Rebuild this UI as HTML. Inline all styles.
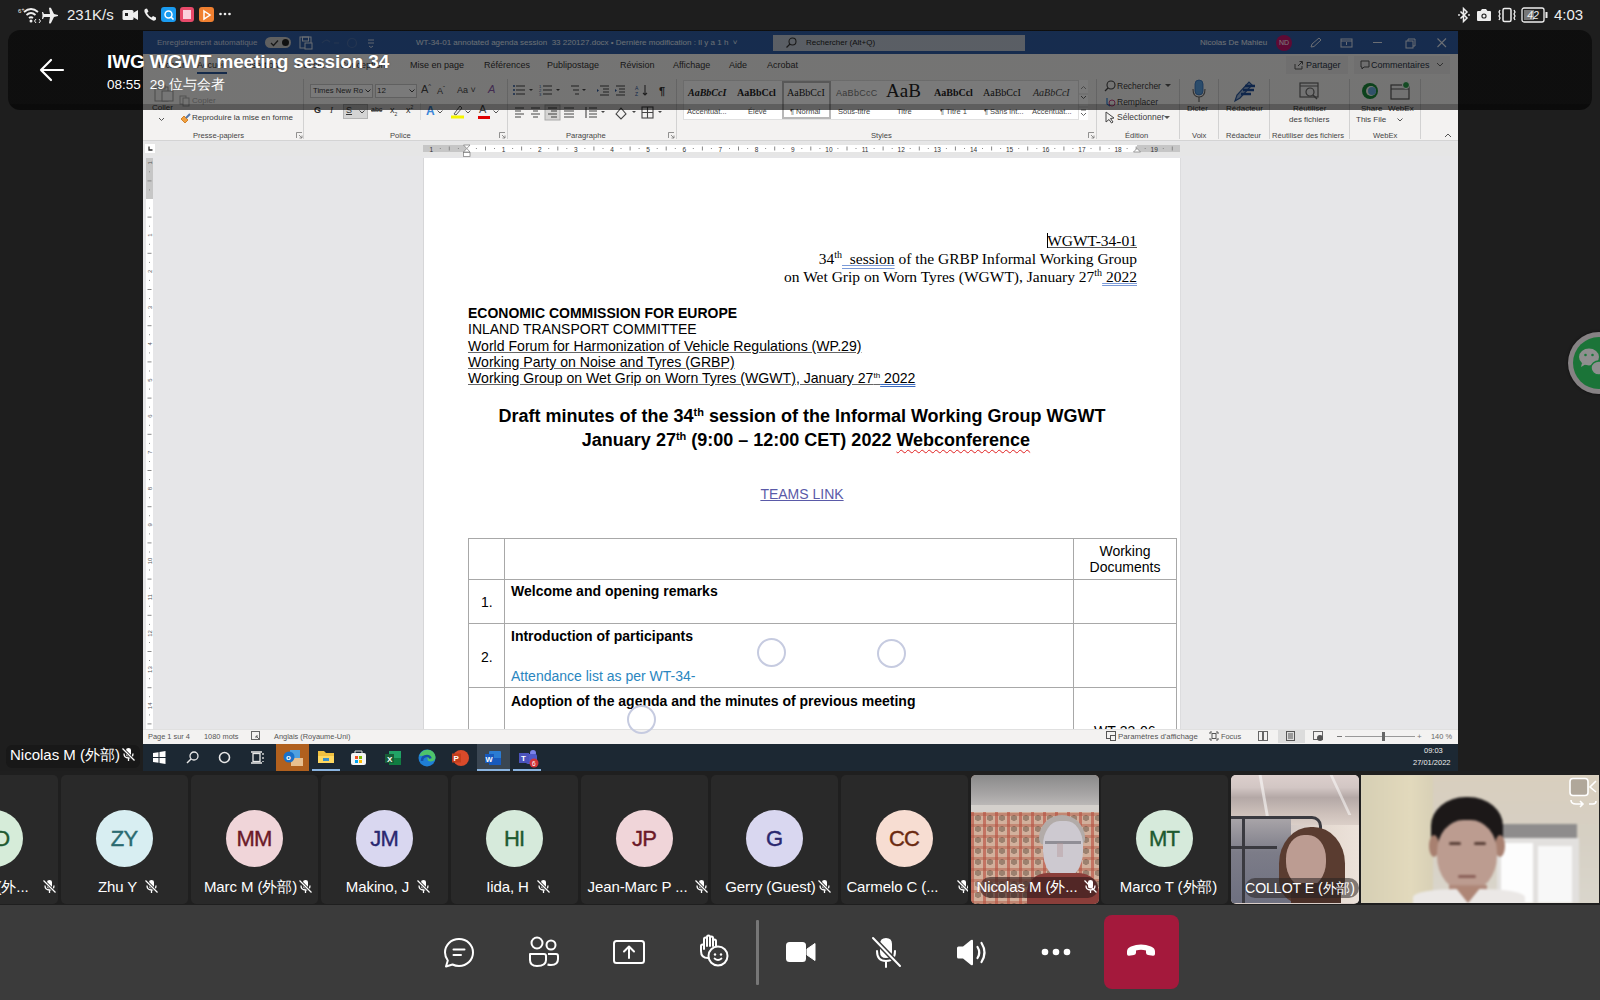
<!DOCTYPE html>
<html><head><meta charset="utf-8">
<style>
*{margin:0;padding:0;box-sizing:border-box}
html,body{width:1600px;height:1000px;overflow:hidden;background:#1e1e1e;font-family:"Liberation Sans",sans-serif}
.a{position:absolute;white-space:nowrap}
svg{position:absolute;overflow:visible}
.rb{font-size:8px;color:#3a3a3a}
.lbl{font-size:7.6px;color:#444;top:131px}
.tab{font-size:9px;color:#333;top:60px}
.sep{position:absolute;top:79px;width:1px;height:60px;background:#d2d2d2}
.ttl{font-size:8px;color:#fff;top:38px}
.tile{position:absolute;top:775px;width:127px;height:129px;background:#292929;border-radius:5px;overflow:hidden}
.av{position:absolute;left:35px;top:35px;width:57px;height:57px;border-radius:50%;text-align:center;line-height:58px;font-size:22px;letter-spacing:-0.8px;text-indent:-0.8px;-webkit-text-stroke:0.4px currentColor}
.nm{position:absolute;left:4px;top:103px;width:127px;text-align:center;color:#fff;font-size:15px;white-space:nowrap;letter-spacing:-0.1px}
</style></head><body>

<!-- ============ WORD WINDOW ============ -->
<div class="a" style="left:143px;top:31px;width:1315px;height:740px;background:#e6e6e8"></div>
<!-- title bar -->
<div class="a" style="left:143px;top:31px;width:1315px;height:23px;background:#2f5ca2"></div>
<!-- tabs + ribbon bg -->
<div class="a" style="left:143px;top:54px;width:1315px;height:87px;background:#f3f2f1;border-bottom:1px solid #d4d4d4"></div>
<!-- ruler row bg -->
<div class="a" style="left:143px;top:142px;width:1315px;height:14px;background:#e6e6e6"></div>

<!-- title bar content -->
<div class="a ttl" style="left:157px;color:#c9d3e6">Enregistrement automatique</div>
<div class="a" style="left:265px;top:37px;width:26px;height:11px;border-radius:6px;background:#c8c8c8"></div>
<svg style="left:270px;top:39px" width="10" height="8"><path d="M1 4 L3.5 6.5 L8 1.5" stroke="#333" stroke-width="1.3" fill="none"/></svg>
<div class="a" style="left:282px;top:39px;width:7px;height:7px;border-radius:50%;background:#222"></div>
<svg style="left:299px;top:36px" width="14" height="14"><rect x="1" y="1" width="11" height="11" fill="none" stroke="#dbe3f0" stroke-width="1"/><rect x="3.5" y="1" width="6" height="4" fill="none" stroke="#dbe3f0" stroke-width="1"/><rect x="6" y="7" width="7" height="6" fill="#2f5ca2" stroke="#dbe3f0" stroke-width="1"/></svg>
<svg style="left:320px;top:37px" width="40" height="12"><path d="M2 6 Q6 1 10 5" stroke="#4b6ea8" stroke-width="1.2" fill="none"/><path d="M14 6 L19 6" stroke="#4b6ea8" stroke-width="1.2"/><circle cx="32" cy="6" r="4.5" stroke="#4b6ea8" stroke-width="1.2" fill="none"/></svg>
<svg style="left:367px;top:38px" width="8" height="10"><path d="M1 2 H7 M1 5 H7 M2 8 L4 9.5 L6 8" stroke="#c9d3e6" stroke-width="1" fill="none"/></svg>
<div class="a ttl" style="left:416px;color:#dfe6f2">WT-34-01 annotated agenda session &nbsp;33 220127.docx • Dernière modification : Il y a 1 h &nbsp;˅</div>
<div class="a" style="left:773px;top:35px;width:252px;height:16px;background:#bcc5d2"></div>
<svg style="left:785px;top:37px" width="12" height="12"><circle cx="7.5" cy="4.5" r="3.5" stroke="#333" stroke-width="1.1" fill="none"/><path d="M5 7 L1.5 10.5" stroke="#333" stroke-width="1.3"/></svg>
<div class="a ttl" style="left:806px;color:#222">Rechercher (Alt+Q)</div>
<div class="a ttl" style="left:1200px;color:#e6ecf5">Nicolas De Mahieu</div>
<div class="a" style="left:1276px;top:35px;width:16px;height:16px;border-radius:50%;background:#c4146c;color:#fff;font-size:7px;line-height:16px;text-align:center">ND</div>
<svg style="left:1309px;top:37px" width="14" height="12"><path d="M2 10 L3 7 L10 1 L12 3 L5 9.5 Z" stroke="#dfe6f2" stroke-width="1" fill="none"/></svg>
<svg style="left:1340px;top:38px" width="14" height="10"><rect x="1" y="1" width="11" height="8" stroke="#dfe6f2" stroke-width="1" fill="none"/><path d="M1 3 H12 M6.5 4 V7" stroke="#dfe6f2" stroke-width="1"/></svg>
<div class="a" style="left:1373px;top:42px;width:9px;height:1px;background:#dfe6f2"></div>
<svg style="left:1405px;top:38px" width="12" height="12"><rect x="1" y="3" width="7" height="7" stroke="#dfe6f2" stroke-width="1" fill="none"/><path d="M3 3 V1 H10 V8 H8" stroke="#dfe6f2" stroke-width="1" fill="none"/></svg>
<svg style="left:1436px;top:37px" width="12" height="12"><path d="M1.5 1.5 L10 10 M10 1.5 L1.5 10" stroke="#dfe6f2" stroke-width="1.1"/></svg>

<!-- tabs -->
<div class="a tab" style="left:158px">Fichier</div>
<div class="a tab" style="left:197px">Accueil</div>
<div class="a" style="left:197px;top:72px;width:30px;height:2px;background:#2b579a"></div>
<div class="a tab" style="left:244px">Insertion</div>
<div class="a tab" style="left:297px">Dessin</div>
<div class="a tab" style="left:340px">Conception</div>
<div class="a tab" style="left:410px">Mise en page</div>
<div class="a tab" style="left:484px">Références</div>
<div class="a tab" style="left:547px">Publipostage</div>
<div class="a tab" style="left:620px">Révision</div>
<div class="a tab" style="left:673px">Affichage</div>
<div class="a tab" style="left:729px">Aide</div>
<div class="a tab" style="left:767px">Acrobat</div>
<div class="a" style="left:1286px;top:56px;width:62px;height:18px;background:#e9e8e7"></div>
<svg style="left:1294px;top:60px" width="10" height="10"><path d="M1 4 V9 H8 V6 M4 6 L8 2 M5.5 1.5 H8.5 V4.5" stroke="#555" stroke-width="1" fill="none"/></svg>
<div class="a tab" style="left:1306px;color:#2a3548">Partager</div>
<div class="a" style="left:1354px;top:56px;width:96px;height:18px;background:#e9e8e7"></div>
<svg style="left:1360px;top:60px" width="10" height="10"><path d="M1 1 H9 V7 H4 L2 9 V7 H1 Z" stroke="#555" stroke-width="1" fill="none"/></svg>
<div class="a tab" style="left:1371px;color:#2a3548">Commentaires</div>
<svg style="left:1436px;top:62px" width="8" height="6"><path d="M1 1 L4 4 L7 1" stroke="#666" stroke-width="1" fill="none"/></svg>

<!-- ribbon: presse-papiers -->
<svg style="left:153px;top:84px" width="22" height="18"><rect x="2" y="3" width="13" height="14" fill="none" stroke="#999" stroke-width="1"/><rect x="5" y="1" width="7" height="4" fill="#f3f2f1" stroke="#999" stroke-width="1"/><rect x="9" y="7" width="11" height="10" fill="#f6f6f6" stroke="#999" stroke-width="1"/></svg>
<div class="a rb" style="left:152px;top:103px">Coller</div>
<svg style="left:158px;top:117px" width="7" height="5"><path d="M1 1 L3.5 3.5 L6 1" stroke="#555" stroke-width="1" fill="none"/></svg>
<svg style="left:179px;top:95px" width="12" height="12"><rect x="1" y="1" width="6" height="8" fill="none" stroke="#aaa" stroke-width="1"/><rect x="4" y="3" width="6" height="8" fill="#f3f2f1" stroke="#aaa" stroke-width="1"/></svg>
<div class="a rb" style="left:192px;top:96px;color:#a8a8a8">Copier</div>
<svg style="left:179px;top:112px" width="13" height="13"><path d="M2 7 L6 11 L9 8 L5 4 Z" fill="#f0a040" stroke="#c87010" stroke-width="0.8"/><path d="M7 6 L11 2" stroke="#5577aa" stroke-width="2"/></svg>
<div class="a rb" style="left:192px;top:113px">Reproduire la mise en forme</div>
<div class="a lbl" style="left:193px">Presse-papiers</div>
<svg style="left:296px;top:132px" width="7" height="7"><path d="M0.5 0.5 H6 M0.5 0.5 V6 M3 3 L6 6 M6 3.5 V6 H3.5" stroke="#777" stroke-width="0.8" fill="none"/></svg>
<div class="sep" style="left:303px"></div>

<!-- police -->
<div class="a" style="left:310px;top:84px;width:63px;height:14px;background:#fff;border:1px solid #c8c8c8"></div>
<div class="a rb" style="left:313px;top:86px;font-size:7.7px">Times New Ro</div>
<svg style="left:365px;top:89px" width="6" height="4"><path d="M0.5 0.5 L3 3 L5.5 0.5" stroke="#444" stroke-width="1" fill="none"/></svg>
<div class="a" style="left:375px;top:84px;width:42px;height:14px;background:#fff;border:1px solid #c8c8c8"></div>
<div class="a rb" style="left:377px;top:86px">12</div>
<svg style="left:409px;top:89px" width="6" height="4"><path d="M0.5 0.5 L3 3 L5.5 0.5" stroke="#444" stroke-width="1" fill="none"/></svg>
<div class="a" style="left:421px;top:83px;font-size:11px;color:#444">A<sup style="font-size:6px">^</sup></div>
<div class="a" style="left:437px;top:85px;font-size:9px;color:#444">A<sup style="font-size:6px">ˇ</sup></div>
<div class="a" style="left:457px;top:85px;font-size:9px;color:#444">Aa ˅</div>
<div class="a" style="left:488px;top:83px;font-size:11px;color:#8a5aa8;font-style:italic">A</div>
<div class="a" style="left:314px;top:105px;font-size:9px;font-weight:bold;color:#333">G</div>
<div class="a" style="left:330px;top:105px;font-size:9px;font-style:italic;font-family:'Liberation Serif';color:#333">I</div>
<div class="a" style="left:343px;top:104px;width:25px;height:15px;background:#d4d4d4;border:1px solid #b4b4b4"></div>
<div class="a" style="left:346px;top:105px;font-size:9px;text-decoration:underline;color:#333">S</div>
<svg style="left:359px;top:110px" width="6" height="4"><path d="M0.5 0.5 L3 3 L5.5 0.5" stroke="#444" stroke-width="1" fill="none"/></svg>
<div class="a" style="left:371px;top:106px;font-size:7px;color:#444;text-decoration:line-through">abc</div>
<div class="a" style="left:390px;top:105px;font-size:9px;color:#333">x<sub style="font-size:5px">2</sub></div>
<div class="a" style="left:406px;top:104px;font-size:9px;color:#333">x<sup style="font-size:5px">2</sup></div>
<div class="sep" style="left:420px;top:103px;height:17px;background:#ddd"></div>
<div class="a" style="left:426px;top:104px;font-size:12px;font-weight:bold;color:#3b86d8">A</div>
<svg style="left:437px;top:110px" width="6" height="4"><path d="M0.5 0.5 L3 3 L5.5 0.5" stroke="#555" stroke-width="1" fill="none"/></svg>
<svg style="left:450px;top:104px" width="14" height="15"><path d="M4 10 L10 2 L12 4 L6 11 Z" fill="none" stroke="#555" stroke-width="1"/><rect x="1" y="11.5" width="13" height="3" fill="#f5f500"/></svg>
<svg style="left:465px;top:110px" width="6" height="4"><path d="M0.5 0.5 L3 3 L5.5 0.5" stroke="#555" stroke-width="1" fill="none"/></svg>
<div class="a" style="left:479px;top:103px;font-size:11px;color:#444">A</div>
<div class="a" style="left:478px;top:116px;width:12px;height:3px;background:#e00000"></div>
<svg style="left:493px;top:110px" width="6" height="4"><path d="M0.5 0.5 L3 3 L5.5 0.5" stroke="#555" stroke-width="1" fill="none"/></svg>
<div class="a lbl" style="left:390px">Police</div>
<svg style="left:499px;top:132px" width="7" height="7"><path d="M0.5 0.5 H6 M0.5 0.5 V6 M3 3 L6 6 M6 3.5 V6 H3.5" stroke="#777" stroke-width="0.8" fill="none"/></svg>
<div class="sep" style="left:507px"></div>

<!-- paragraphe -->
<svg style="left:512px;top:84px" width="160" height="38">
 <g stroke="#444" stroke-width="1.1" fill="none">
  <path d="M4 2 H13 M4 6 H13 M4 10 H13"/><path d="M31 2 H40 M31 6 H40 M31 10 H40"/><path d="M59 2 H67 M61 6 H67 M63 10 H67"/>
  <path d="M88 2 H97 M91 5 H97 M91 8 H97 M88 11 H97"/><path d="M104 2 H113 M107 5 H113 M107 8 H113 M104 11 H113"/>
  <path d="M133 1 V11 M131 9 L133 11 L135 9"/>
  <path d="M3 24 H12 M3 27 H9 M3 30 H12 M3 33 H9"/><path d="M19 24 H28 M21 27 H26 M19 30 H28 M21 33 H26"/><path d="M36 24 H45 M39 27 H45 M36 30 H45 M39 33 H45"/><path d="M52 24 H62 M52 27 H62 M52 30 H62 M52 33 H62"/>
  <path d="M77 24 H85 M77 27 H85 M77 30 H85 M77 33 H85 M74 23 V34"/>
  <path d="M104 30 L109 24 L114 30 L109 35 Z"/>
  <rect x="130" y="23" width="11" height="11"/><path d="M135.5 23 V34 M130 28.5 H141"/>
 </g>
 <g fill="#2b579a"><circle cx="2" cy="2" r="1"/><circle cx="2" cy="6" r="1"/><circle cx="2" cy="10" r="1"/></g>
 <g fill="#2b579a" font-size="4" font-family="Liberation Sans"><text x="27" y="4">1</text><text x="27" y="8">2</text><text x="27" y="12">3</text></g>
 <g fill="#2b579a"><path d="M87 6.5 L85 5 V8 Z"/><path d="M103 5 L105 6.5 L103 8 Z"/><text x="123" y="6" font-size="5" font-family="Liberation Sans">A</text><text x="123" y="12" font-size="5" font-family="Liberation Sans">Z</text></g>
 <text x="147" y="11" font-size="11" fill="#333" font-family="Liberation Sans" font-weight="bold">¶</text>
 <g fill="#444"><path d="M17 5 L21 5 L19 7 Z"/><path d="M44 5 L48 5 L46 7 Z"/><path d="M70 5 L74 5 L72 7 Z"/><path d="M89 27 L93 27 L91 29 Z"/><path d="M120 27 L124 27 L122 29 Z"/><path d="M146 27 L150 27 L148 29 Z"/></g>
 <rect x="33" y="21" width="15" height="15" fill="rgba(0,0,0,0.12)" stroke="#aaa" stroke-width="1"/>
</svg>
<div class="a lbl" style="left:566px">Paragraphe</div>
<svg style="left:668px;top:132px" width="7" height="7"><path d="M0.5 0.5 H6 M0.5 0.5 V6 M3 3 L6 6 M6 3.5 V6 H3.5" stroke="#777" stroke-width="0.8" fill="none"/></svg>
<div class="sep" style="left:676px"></div>

<!-- styles gallery -->
<div class="a" style="left:683px;top:80px;width:400px;height:40px;background:#fff;border:1px solid #e0e0e0"></div>
<div class="a" style="left:782px;top:81px;width:49px;height:38px;border:2px solid #b8b8b8;background:#fff"></div>
<div class="a" style="left:688px;top:87px;font-family:'Liberation Serif';font-style:italic;font-weight:bold;font-size:10px;color:#222">AaBbCcI</div>
<div class="a" style="left:737px;top:87px;font-family:'Liberation Serif';font-weight:bold;font-size:10px;color:#222">AaBbCcl</div>
<div class="a" style="left:787px;top:87px;font-family:'Liberation Serif';font-size:10px;color:#222">AaBbCcI</div>
<div class="a" style="left:836px;top:88px;font-family:'Liberation Sans';font-size:9px;color:#777;letter-spacing:0.3px">AaBbCcC</div>
<div class="a" style="left:886px;top:80px;font-family:'Liberation Serif';font-size:19px;color:#222">AaB</div>
<div class="a" style="left:934px;top:87px;font-family:'Liberation Serif';font-weight:bold;font-size:10px;color:#222">AaBbCcl</div>
<div class="a" style="left:983px;top:87px;font-family:'Liberation Serif';font-size:10px;color:#222">AaBbCcI</div>
<div class="a" style="left:1033px;top:87px;font-family:'Liberation Serif';font-style:italic;font-size:10px;color:#444">AaBbCcI</div>
<div class="a rb" style="left:687px;top:107px;font-size:7.5px;color:#444">Accentuat...</div>
<div class="a rb" style="left:748px;top:107px;font-size:7.5px;color:#444">Élevé</div>
<div class="a rb" style="left:790px;top:107px;font-size:7.5px;color:#444">¶ Normal</div>
<div class="a rb" style="left:838px;top:107px;font-size:7.5px;color:#444">Sous-titre</div>
<div class="a rb" style="left:897px;top:107px;font-size:7.5px;color:#444">Titre</div>
<div class="a rb" style="left:940px;top:107px;font-size:7.5px;color:#444">¶ Titre 1</div>
<div class="a rb" style="left:984px;top:107px;font-size:7.5px;color:#444">¶ Sans int...</div>
<div class="a rb" style="left:1032px;top:107px;font-size:7.5px;color:#444">Accentuat...</div>
<div class="a" style="left:1078px;top:80px;width:10px;height:40px;border-left:1px solid #e0e0e0;background:#fff"></div>
<svg style="left:1079px;top:82px" width="9" height="38"><path d="M2 7 L4.5 4.5 L7 7" stroke="#999" fill="none"/><path d="M2 14 L4.5 16.5 L7 14" stroke="#666" fill="none"/><path d="M2 28 H7 M2 31 L4.5 33.5 L7 31" stroke="#666" fill="none"/><path d="M0 12 H9 M0 25 H9" stroke="#ddd"/></svg>
<div class="a lbl" style="left:871px">Styles</div>
<svg style="left:1088px;top:132px" width="7" height="7"><path d="M0.5 0.5 H6 M0.5 0.5 V6 M3 3 L6 6 M6 3.5 V6 H3.5" stroke="#777" stroke-width="0.8" fill="none"/></svg>
<div class="sep" style="left:1096px"></div>

<!-- edition -->
<svg style="left:1104px;top:80px" width="12" height="12"><circle cx="7" cy="5" r="4" stroke="#444" stroke-width="1.1" fill="none"/><path d="M4 8 L1 11" stroke="#444" stroke-width="1.3"/></svg>
<div class="a rb" style="left:1117px;top:81px;font-size:8.5px">Rechercher</div><svg style="left:1165px;top:84px" width="6" height="4"><path d="M0 0 H6 L3 3 Z" fill="#555"/></svg>
<svg style="left:1104px;top:96px" width="12" height="12"><path d="M3 2 V8 L6 10" stroke="#2b7cd3" stroke-width="1.2" fill="none"/><circle cx="8" cy="7" r="3" stroke="#c04080" fill="none"/></svg>
<div class="a rb" style="left:1117px;top:97px;font-size:8.5px">Remplacer</div>
<svg style="left:1104px;top:111px" width="12" height="13"><path d="M2 1 L2 11 L5 8.5 L7.5 12 L9 11 L6.5 7.5 L10 7 Z" stroke="#444" stroke-width="1" fill="none"/></svg>
<div class="a rb" style="left:1117px;top:112px;font-size:8.5px">Sélectionner</div><svg style="left:1164px;top:116px" width="6" height="4"><path d="M0 0 H6 L3 3 Z" fill="#555"/></svg>
<div class="a lbl" style="left:1125px">Édition</div>
<div class="sep" style="left:1179px"></div>

<!-- voix -->
<svg style="left:1191px;top:79px" width="16" height="24"><rect x="4" y="1" width="8" height="15" rx="4" fill="#5a9ee0" stroke="#2f6db8" stroke-width="0.8"/><path d="M2 10 Q2 18 8 18 Q14 18 14 10" stroke="#666" stroke-width="1.1" fill="none"/><path d="M8 18 V23" stroke="#666" stroke-width="1.2"/></svg>
<div class="a rb" style="left:1187px;top:104px">Dicter</div>
<div class="a lbl" style="left:1192px">Voix</div>
<div class="sep" style="left:1218px"></div>

<!-- redacteur -->
<svg style="left:1232px;top:79px" width="26" height="24"><path d="M3 22 L5 16 L17 3 L20 6 L8 19 Z" fill="#9ab4d8" stroke="#2b579a" stroke-width="1.2"/><path d="M13 7 H23 M11 11 H22 M9 15 H19" stroke="#1f4e9a" stroke-width="2.4"/></svg>
<div class="a rb" style="left:1226px;top:104px">Rédacteur</div>
<div class="a lbl" style="left:1226px">Rédacteur</div>
<div class="sep" style="left:1269px"></div>

<!-- reutiliser -->
<svg style="left:1299px;top:82px" width="22" height="20"><rect x="1" y="1" width="18" height="14" fill="#eee" stroke="#666" stroke-width="1.2"/><path d="M1 4 H19" stroke="#666"/><circle cx="11" cy="10" r="4" stroke="#666" stroke-width="1.2" fill="none"/><path d="M14 13 L18 17" stroke="#666" stroke-width="1.5"/></svg>
<div class="a rb" style="left:1293px;top:104px">Réutiliser</div>
<div class="a rb" style="left:1289px;top:115px">des fichiers</div>
<div class="a lbl" style="left:1272px">Réutiliser des fichiers</div>
<div class="sep" style="left:1349px"></div>

<!-- webex -->
<svg style="left:1360px;top:81px" width="20" height="20"><circle cx="10" cy="10" r="8" fill="#1a8a3a"/><circle cx="11" cy="10" r="5" fill="#f3f2f1"/><circle cx="12" cy="10" r="4" fill="#6ad"/></svg>
<svg style="left:1390px;top:81px" width="22" height="20"><rect x="1" y="4" width="18" height="14" fill="#eee" stroke="#555" stroke-width="1.2"/><path d="M1 8 H19" stroke="#555"/><circle cx="16" cy="4" r="3.5" fill="#2a9d4a" stroke="#fff"/></svg>
<div class="a rb" style="left:1361px;top:104px">Share</div>
<div class="a rb" style="left:1388px;top:104px">WebEx</div>
<div class="a rb" style="left:1356px;top:115px">This File</div>
<svg style="left:1397px;top:118px" width="6" height="4"><path d="M0.5 0.5 L3 3 L5.5 0.5" stroke="#555" stroke-width="1" fill="none"/></svg>
<div class="a lbl" style="left:1373px">WebEx</div>
<div class="sep" style="left:1420px"></div>
<svg style="left:1444px;top:133px" width="8" height="5"><path d="M1 4 L4 1 L7 4" stroke="#555" stroke-width="1" fill="none"/></svg>

<!-- rulers -->
<div class="a" style="left:145px;top:144px;width:10px;height:9px;background:#fff"></div>
<svg style="left:147px;top:145px" width="7" height="7"><path d="M2 1.5 V5 H5.5" stroke="#333" stroke-width="1.3" fill="none"/></svg>
<div class="a" style="left:423px;top:145px;width:43px;height:7px;background:#c6c6c6"></div>
<div class="a" style="left:466px;top:145px;width:671px;height:7px;background:#fff"></div>
<div class="a" style="left:1137px;top:145px;width:43px;height:7px;background:#c6c6c6"></div>
<svg id="hr" style="left:0;top:145px" width="1600" height="14"><text x="431.2" y="6.5" font-size="6.5" text-anchor="middle" fill="#333" font-family="Liberation Sans">1</text>
<rect x="439.8" y="3" width="1" height="1" fill="#888"/>
<rect x="448.8" y="1.5" width="1" height="4" fill="#888"/>
<rect x="457.9" y="3" width="1" height="1" fill="#888"/>
<rect x="475.9" y="3" width="1" height="1" fill="#888"/>
<rect x="485.0" y="1.5" width="1" height="4" fill="#888"/>
<rect x="494.0" y="3" width="1" height="1" fill="#888"/>
<text x="503.5" y="6.5" font-size="6.5" text-anchor="middle" fill="#333" font-family="Liberation Sans">1</text>
<rect x="512.1" y="3" width="1" height="1" fill="#888"/>
<rect x="521.1" y="1.5" width="1" height="4" fill="#888"/>
<rect x="530.2" y="3" width="1" height="1" fill="#888"/>
<text x="539.7" y="6.5" font-size="6.5" text-anchor="middle" fill="#333" font-family="Liberation Sans">2</text>
<rect x="548.2" y="3" width="1" height="1" fill="#888"/>
<rect x="557.3" y="1.5" width="1" height="4" fill="#888"/>
<rect x="566.3" y="3" width="1" height="1" fill="#888"/>
<text x="575.8" y="6.5" font-size="6.5" text-anchor="middle" fill="#333" font-family="Liberation Sans">3</text>
<rect x="584.4" y="3" width="1" height="1" fill="#888"/>
<rect x="593.4" y="1.5" width="1" height="4" fill="#888"/>
<rect x="602.5" y="3" width="1" height="1" fill="#888"/>
<text x="612.0" y="6.5" font-size="6.5" text-anchor="middle" fill="#333" font-family="Liberation Sans">4</text>
<rect x="620.5" y="3" width="1" height="1" fill="#888"/>
<rect x="629.6" y="1.5" width="1" height="4" fill="#888"/>
<rect x="638.6" y="3" width="1" height="1" fill="#888"/>
<text x="648.1" y="6.5" font-size="6.5" text-anchor="middle" fill="#333" font-family="Liberation Sans">5</text>
<rect x="656.7" y="3" width="1" height="1" fill="#888"/>
<rect x="665.7" y="1.5" width="1" height="4" fill="#888"/>
<rect x="674.8" y="3" width="1" height="1" fill="#888"/>
<text x="684.3" y="6.5" font-size="6.5" text-anchor="middle" fill="#333" font-family="Liberation Sans">6</text>
<rect x="692.8" y="3" width="1" height="1" fill="#888"/>
<rect x="701.9" y="1.5" width="1" height="4" fill="#888"/>
<rect x="710.9" y="3" width="1" height="1" fill="#888"/>
<text x="720.4" y="6.5" font-size="6.5" text-anchor="middle" fill="#333" font-family="Liberation Sans">7</text>
<rect x="729.0" y="3" width="1" height="1" fill="#888"/>
<rect x="738.0" y="1.5" width="1" height="4" fill="#888"/>
<rect x="747.1" y="3" width="1" height="1" fill="#888"/>
<text x="756.6" y="6.5" font-size="6.5" text-anchor="middle" fill="#333" font-family="Liberation Sans">8</text>
<rect x="765.1" y="3" width="1" height="1" fill="#888"/>
<rect x="774.2" y="1.5" width="1" height="4" fill="#888"/>
<rect x="783.2" y="3" width="1" height="1" fill="#888"/>
<text x="792.8" y="6.5" font-size="6.5" text-anchor="middle" fill="#333" font-family="Liberation Sans">9</text>
<rect x="801.3" y="3" width="1" height="1" fill="#888"/>
<rect x="810.3" y="1.5" width="1" height="4" fill="#888"/>
<rect x="819.4" y="3" width="1" height="1" fill="#888"/>
<text x="828.9" y="6.5" font-size="6.5" text-anchor="middle" fill="#333" font-family="Liberation Sans">10</text>
<rect x="837.4" y="3" width="1" height="1" fill="#888"/>
<rect x="846.5" y="1.5" width="1" height="4" fill="#888"/>
<rect x="855.5" y="3" width="1" height="1" fill="#888"/>
<text x="865.0" y="6.5" font-size="6.5" text-anchor="middle" fill="#333" font-family="Liberation Sans">11</text>
<rect x="873.6" y="3" width="1" height="1" fill="#888"/>
<rect x="882.6" y="1.5" width="1" height="4" fill="#888"/>
<rect x="891.7" y="3" width="1" height="1" fill="#888"/>
<text x="901.2" y="6.5" font-size="6.5" text-anchor="middle" fill="#333" font-family="Liberation Sans">12</text>
<rect x="909.7" y="3" width="1" height="1" fill="#888"/>
<rect x="918.8" y="1.5" width="1" height="4" fill="#888"/>
<rect x="927.8" y="3" width="1" height="1" fill="#888"/>
<text x="937.3" y="6.5" font-size="6.5" text-anchor="middle" fill="#333" font-family="Liberation Sans">13</text>
<rect x="945.9" y="3" width="1" height="1" fill="#888"/>
<rect x="954.9" y="1.5" width="1" height="4" fill="#888"/>
<rect x="964.0" y="3" width="1" height="1" fill="#888"/>
<text x="973.5" y="6.5" font-size="6.5" text-anchor="middle" fill="#333" font-family="Liberation Sans">14</text>
<rect x="982.0" y="3" width="1" height="1" fill="#888"/>
<rect x="991.1" y="1.5" width="1" height="4" fill="#888"/>
<rect x="1000.1" y="3" width="1" height="1" fill="#888"/>
<text x="1009.6" y="6.5" font-size="6.5" text-anchor="middle" fill="#333" font-family="Liberation Sans">15</text>
<rect x="1018.2" y="3" width="1" height="1" fill="#888"/>
<rect x="1027.2" y="1.5" width="1" height="4" fill="#888"/>
<rect x="1036.3" y="3" width="1" height="1" fill="#888"/>
<text x="1045.8" y="6.5" font-size="6.5" text-anchor="middle" fill="#333" font-family="Liberation Sans">16</text>
<rect x="1054.3" y="3" width="1" height="1" fill="#888"/>
<rect x="1063.4" y="1.5" width="1" height="4" fill="#888"/>
<rect x="1072.4" y="3" width="1" height="1" fill="#888"/>
<text x="1081.9" y="6.5" font-size="6.5" text-anchor="middle" fill="#333" font-family="Liberation Sans">17</text>
<rect x="1090.5" y="3" width="1" height="1" fill="#888"/>
<rect x="1099.5" y="1.5" width="1" height="4" fill="#888"/>
<rect x="1108.6" y="3" width="1" height="1" fill="#888"/>
<text x="1118.1" y="6.5" font-size="6.5" text-anchor="middle" fill="#333" font-family="Liberation Sans">18</text>
<rect x="1126.6" y="3" width="1" height="1" fill="#888"/>
<rect x="1135.7" y="1.5" width="1" height="4" fill="#888"/>
<rect x="1144.7" y="3" width="1" height="1" fill="#888"/>
<text x="1154.2" y="6.5" font-size="6.5" text-anchor="middle" fill="#333" font-family="Liberation Sans">19</text>
<rect x="1162.8" y="3" width="1" height="1" fill="#888"/>
<rect x="1171.8" y="1.5" width="1" height="4" fill="#888"/>
<path d="M463.5 0 H470 L466.8 3.5 Z M463.5 7 L466.8 3.5 L470 7 Z" fill="#fff" stroke="#777" stroke-width="0.7"/><rect x="463.5" y="7.5" width="6.5" height="4" fill="#fff" stroke="#777" stroke-width="0.7"/>
<path d="M1133.5 7 L1137 3.5 L1140.5 7 Z" fill="#fff" stroke="#777" stroke-width="0.7"/></svg>
<div class="a" style="left:146px;top:158px;width:7px;height:571px;background:#fff"></div>
<div class="a" style="left:146px;top:158px;width:7px;height:41px;background:#c6c6c6"></div>
<svg id="vr" style="left:146px;top:0" width="8" height="740"><text x="0" y="0" transform="translate(5.5 162.8) rotate(-90)" font-size="6" text-anchor="middle" fill="#555" font-family="Liberation Sans" dy="0">1</text>
<rect x="3" y="171.3" width="1" height="1" fill="#888"/>
<rect x="1.5" y="180.4" width="4" height="1" fill="#888"/>
<rect x="3" y="189.4" width="1" height="1" fill="#888"/>
<rect x="3" y="207.6" width="1" height="1" fill="#888"/>
<rect x="1.5" y="216.6" width="4" height="1" fill="#888"/>
<rect x="3" y="225.7" width="1" height="1" fill="#888"/>
<text x="0" y="0" transform="translate(5.5 235.2) rotate(-90)" font-size="6" text-anchor="middle" fill="#555" font-family="Liberation Sans" dy="0">1</text>
<rect x="3" y="243.8" width="1" height="1" fill="#888"/>
<rect x="1.5" y="252.8" width="4" height="1" fill="#888"/>
<rect x="3" y="261.9" width="1" height="1" fill="#888"/>
<text x="0" y="0" transform="translate(5.5 271.4) rotate(-90)" font-size="6" text-anchor="middle" fill="#555" font-family="Liberation Sans" dy="0">2</text>
<rect x="3" y="279.9" width="1" height="1" fill="#888"/>
<rect x="1.5" y="289.0" width="4" height="1" fill="#888"/>
<rect x="3" y="298.1" width="1" height="1" fill="#888"/>
<text x="0" y="0" transform="translate(5.5 307.6) rotate(-90)" font-size="6" text-anchor="middle" fill="#555" font-family="Liberation Sans" dy="0">3</text>
<rect x="3" y="316.1" width="1" height="1" fill="#888"/>
<rect x="1.5" y="325.2" width="4" height="1" fill="#888"/>
<rect x="3" y="334.2" width="1" height="1" fill="#888"/>
<text x="0" y="0" transform="translate(5.5 343.8) rotate(-90)" font-size="6" text-anchor="middle" fill="#555" font-family="Liberation Sans" dy="0">4</text>
<rect x="3" y="352.4" width="1" height="1" fill="#888"/>
<rect x="1.5" y="361.4" width="4" height="1" fill="#888"/>
<rect x="3" y="370.5" width="1" height="1" fill="#888"/>
<text x="0" y="0" transform="translate(5.5 380.0) rotate(-90)" font-size="6" text-anchor="middle" fill="#555" font-family="Liberation Sans" dy="0">5</text>
<rect x="3" y="388.6" width="1" height="1" fill="#888"/>
<rect x="1.5" y="397.6" width="4" height="1" fill="#888"/>
<rect x="3" y="406.6" width="1" height="1" fill="#888"/>
<text x="0" y="0" transform="translate(5.5 416.2) rotate(-90)" font-size="6" text-anchor="middle" fill="#555" font-family="Liberation Sans" dy="0">6</text>
<rect x="3" y="424.8" width="1" height="1" fill="#888"/>
<rect x="1.5" y="433.8" width="4" height="1" fill="#888"/>
<rect x="3" y="442.9" width="1" height="1" fill="#888"/>
<text x="0" y="0" transform="translate(5.5 452.4) rotate(-90)" font-size="6" text-anchor="middle" fill="#555" font-family="Liberation Sans" dy="0">7</text>
<rect x="3" y="461.0" width="1" height="1" fill="#888"/>
<rect x="1.5" y="470.0" width="4" height="1" fill="#888"/>
<rect x="3" y="479.1" width="1" height="1" fill="#888"/>
<text x="0" y="0" transform="translate(5.5 488.6) rotate(-90)" font-size="6" text-anchor="middle" fill="#555" font-family="Liberation Sans" dy="0">8</text>
<rect x="3" y="497.2" width="1" height="1" fill="#888"/>
<rect x="1.5" y="506.2" width="4" height="1" fill="#888"/>
<rect x="3" y="515.2" width="1" height="1" fill="#888"/>
<text x="0" y="0" transform="translate(5.5 524.8) rotate(-90)" font-size="6" text-anchor="middle" fill="#555" font-family="Liberation Sans" dy="0">9</text>
<rect x="3" y="533.4" width="1" height="1" fill="#888"/>
<rect x="1.5" y="542.4" width="4" height="1" fill="#888"/>
<rect x="3" y="551.5" width="1" height="1" fill="#888"/>
<text x="0" y="0" transform="translate(5.5 561.0) rotate(-90)" font-size="6" text-anchor="middle" fill="#555" font-family="Liberation Sans" dy="0">10</text>
<rect x="3" y="569.5" width="1" height="1" fill="#888"/>
<rect x="1.5" y="578.6" width="4" height="1" fill="#888"/>
<rect x="3" y="587.7" width="1" height="1" fill="#888"/>
<text x="0" y="0" transform="translate(5.5 597.2) rotate(-90)" font-size="6" text-anchor="middle" fill="#555" font-family="Liberation Sans" dy="0">11</text>
<rect x="3" y="605.8" width="1" height="1" fill="#888"/>
<rect x="1.5" y="614.8" width="4" height="1" fill="#888"/>
<rect x="3" y="623.9" width="1" height="1" fill="#888"/>
<text x="0" y="0" transform="translate(5.5 633.4) rotate(-90)" font-size="6" text-anchor="middle" fill="#555" font-family="Liberation Sans" dy="0">12</text>
<rect x="3" y="642.0" width="1" height="1" fill="#888"/>
<rect x="1.5" y="651.0" width="4" height="1" fill="#888"/>
<rect x="3" y="660.0" width="1" height="1" fill="#888"/>
<text x="0" y="0" transform="translate(5.5 669.6) rotate(-90)" font-size="6" text-anchor="middle" fill="#555" font-family="Liberation Sans" dy="0">13</text>
<rect x="3" y="678.2" width="1" height="1" fill="#888"/>
<rect x="1.5" y="687.2" width="4" height="1" fill="#888"/>
<rect x="3" y="696.2" width="1" height="1" fill="#888"/>
<text x="0" y="0" transform="translate(5.5 705.8) rotate(-90)" font-size="6" text-anchor="middle" fill="#555" font-family="Liberation Sans" dy="0">14</text>
<rect x="3" y="714.4" width="1" height="1" fill="#888"/>
<rect x="1.5" y="723.4" width="4" height="1" fill="#888"/></svg>

<!-- document area -->
<div class="a" style="left:423px;top:158px;width:758px;height:571px;background:#fff;overflow:hidden">
 <div style="position:absolute;left:0;top:0;width:758px;height:571px;font-family:'Liberation Sans';color:#000">
  <!-- header right (serif) -->
  <div class="a" style="right:44px;top:74px;font:15.5px 'Liberation Serif';text-decoration:underline;text-decoration-color:#555">WGWT-34-01</div>
  <div class="a" style="left:624px;top:75px;width:1px;height:15px;background:#000"></div>
  <div class="a" style="right:44px;top:92px;font:15.5px 'Liberation Serif'">34<sup style="font-size:10px;vertical-align:6px;line-height:0">th</sup><span style="text-decoration:underline double;text-decoration-color:#7a9ad8">&nbsp; session</span> of the GRBP Informal Working Group</div>
  <div class="a" style="right:44px;top:109.5px;font:15.5px 'Liberation Serif'">on Wet Grip on Worn Tyres (WGWT), January 27<sup style="font-size:10px;vertical-align:6px;line-height:0">th</sup><span style="text-decoration:underline double;text-decoration-color:#7a9ad8"> 2022</span></div>
  <!-- left block -->
  <div class="a" style="left:45px;top:147px;font:bold 14px 'Liberation Sans'">ECONOMIC COMMISSION FOR EUROPE</div>
  <div class="a" style="left:45px;top:163px;font:14px 'Liberation Sans'">INLAND TRANSPORT COMMITTEE</div>
  <div class="a" style="left:45px;top:180px;font:14.1px 'Liberation Sans';text-decoration:underline;text-decoration-color:#666">World Forum for Harmonization of Vehicle Regulations (WP.29)</div>
  <div class="a" style="left:45px;top:196px;font:14.1px 'Liberation Sans';text-decoration:underline;text-decoration-color:#666">Working Party on Noise and Tyres (GRBP)</div>
  <div class="a" style="left:45px;top:212px;font:14.1px 'Liberation Sans'"><span style="text-decoration:underline;text-decoration-color:#666">Working Group on Wet Grip on Worn Tyres (WGWT), January 27<sup style="font-size:8px;vertical-align:5px;line-height:0">th</sup></span><span style="text-decoration:underline double;text-decoration-color:#3a6ac0"> 2022</span></div>
  <!-- title -->
  <div class="a" style="left:0;width:758px;text-align:center;top:248px;font:bold 18px 'Liberation Sans'">Draft minutes of the 34<sup style="font-size:11px;vertical-align:6px;line-height:0">th</sup> session of the Informal Working Group WGWT</div>
  <div class="a" style="left:4px;width:758px;text-align:center;top:272px;font:bold 18px 'Liberation Sans'">January 27<sup style="font-size:11px;vertical-align:6px;line-height:0">th</sup> (9:00 – 12:00 CET) 2022 <span style="text-decoration:underline wavy #e02020;text-decoration-thickness:1px;text-underline-offset:3px">Webconference</span></div>
  <div class="a" style="left:0;width:758px;text-align:center;top:328px;font:14px 'Liberation Sans';color:#5a5aa8;text-decoration:underline">TEAMS LINK</div>
  <!-- table -->
  <div class="a" style="left:45px;top:380px;width:709px;height:200px;border:1px solid #a8a8a8;border-bottom:none"></div>
  <div class="a" style="left:81px;top:380px;width:1px;height:200px;background:#a8a8a8"></div>
  <div class="a" style="left:650px;top:380px;width:1px;height:200px;background:#a8a8a8"></div>
  <div class="a" style="left:45px;top:421px;width:709px;height:1px;background:#a8a8a8"></div>
  <div class="a" style="left:45px;top:465px;width:709px;height:1px;background:#a8a8a8"></div>
  <div class="a" style="left:45px;top:529px;width:709px;height:1px;background:#a8a8a8"></div>
  <div class="a" style="left:650px;top:385px;width:104px;text-align:center;font:14px/16px 'Liberation Sans'">Working<br>Documents</div>
  <div class="a" style="left:58px;top:436px;font:14px 'Liberation Sans'">1.</div>
  <div class="a" style="left:88px;top:425px;font:bold 14px 'Liberation Sans'">Welcome and opening remarks</div>
  <div class="a" style="left:58px;top:491px;font:14px 'Liberation Sans'">2.</div>
  <div class="a" style="left:88px;top:470px;font:bold 14px 'Liberation Sans'">Introduction of participants</div>
  <div class="a" style="left:88px;top:510px;font:14px 'Liberation Sans';color:#2a86c0">Attendance list as per WT-34-</div>
  <div class="a" style="left:88px;top:535px;font:bold 14px 'Liberation Sans'">Adoption of the agenda and the minutes of previous meeting</div>
  <div class="a" style="left:671px;top:565px;font:14px 'Liberation Sans'">WT-33-06</div>
 </div>
</div>
<div class="a" style="left:423px;top:158px;width:1px;height:571px;background:#d6d6d8"></div>
<div class="a" style="left:1180px;top:158px;width:1px;height:571px;background:#dcdcde"></div>
<!-- touch circles -->
<div class="a" style="left:757px;top:638px;width:29px;height:29px;border-radius:50%;border:2px solid #c6cbe0"></div>
<div class="a" style="left:877px;top:639px;width:29px;height:29px;border-radius:50%;border:2px solid #c6cbe0"></div>
<div class="a" style="left:627px;top:705px;width:29px;height:29px;border-radius:50%;border:2px solid #c6cbe0;z-index:5"></div>

<!-- status bar -->
<div class="a" style="left:143px;top:729px;width:1315px;height:15px;background:#f3f2f1;border-top:1px solid #e0e0e0"></div>
<div class="a" style="left:148px;top:732px;font-size:7.4px;color:#555">Page 1 sur 4</div>
<div class="a" style="left:204px;top:732px;font-size:7.4px;color:#555">1080 mots</div>
<svg style="left:251px;top:731px" width="11" height="10"><rect x="0.5" y="0.5" width="8" height="8" fill="none" stroke="#666"/><path d="M5 5 L9 9 M7 5 H5 V7" stroke="#666" fill="none"/></svg>
<div class="a" style="left:274px;top:732px;font-size:7.4px;color:#555">Anglais (Royaume-Uni)</div>
<svg style="left:1106px;top:731px" width="11" height="10"><rect x="0.5" y="0.5" width="9" height="7" fill="none" stroke="#555"/><rect x="4.5" y="4.5" width="5" height="5" fill="#f3f2f1" stroke="#555"/></svg>
<div class="a" style="left:1118px;top:732px;font-size:7.8px;color:#555">Paramètres d'affichage</div>
<svg style="left:1209px;top:731px" width="10" height="10"><path d="M1 3 V1 H3 M7 1 H9 V3 M9 7 V9 H7 M3 9 H1 V7" stroke="#555" fill="none"/><rect x="3" y="2.5" width="4" height="5" fill="none" stroke="#555"/></svg>
<div class="a" style="left:1221px;top:732px;font-size:7.4px;color:#555">Focus</div>
<svg style="left:1258px;top:731px" width="11" height="10"><rect x="0.5" y="0.5" width="4" height="9" fill="none" stroke="#666"/><rect x="5.5" y="0.5" width="4" height="9" fill="none" stroke="#666"/></svg>
<div class="a" style="left:1278px;top:730px;width:27px;height:13px;background:#dcdcdc"></div>
<svg style="left:1286px;top:731px" width="10" height="11"><rect x="0.5" y="0.5" width="8" height="9" fill="none" stroke="#555"/><path d="M2 3 H7 M2 5 H7 M2 7 H7" stroke="#555"/></svg>
<svg style="left:1313px;top:731px" width="11" height="11"><rect x="0.5" y="0.5" width="9" height="8" fill="none" stroke="#666"/><circle cx="7" cy="7" r="3" fill="#555"/></svg>
<div class="a" style="left:1337px;top:736px;width:5px;height:1px;background:#777"></div>
<div class="a" style="left:1345px;top:736px;width:70px;height:1px;background:#999"></div>
<div class="a" style="left:1382px;top:732px;width:3px;height:9px;background:#666"></div>
<div class="a" style="left:1417px;top:732px;font-size:8px;color:#777">+</div>
<div class="a" style="left:1431px;top:732px;font-size:7.4px;color:#666">140 %</div>

<!-- taskbar -->
<div class="a" style="left:143px;top:744px;width:1315px;height:27px;background:#1c2833"></div>
<svg style="left:153px;top:751px" width="13" height="13"><path d="M0 2 L5.5 1.2 V6 H0 Z M6.5 1 L12.5 0 V6 H6.5 Z M0 7 H5.5 V11.8 L0 11 Z M6.5 7 H12.5 V13 L6.5 12 Z" fill="#fff"/></svg>
<svg style="left:186px;top:751px" width="13" height="13"><circle cx="8" cy="5" r="4" stroke="#e8e8e8" stroke-width="1.3" fill="none"/><path d="M5 8 L1 12" stroke="#e8e8e8" stroke-width="1.4"/></svg>
<svg style="left:218px;top:751px" width="13" height="13"><circle cx="6.5" cy="6.5" r="5" stroke="#e8e8e8" stroke-width="1.6" fill="none"/></svg>
<svg style="left:251px;top:751px" width="14" height="13"><rect x="2" y="2.5" width="7" height="8" stroke="#e8e8e8" stroke-width="1.3" fill="none"/><path d="M0 1 H11 M0 12 H11 M12 2 V4 M12 6 V8 M12 10 V11" stroke="#e8e8e8" stroke-width="1.3"/></svg>
<div class="a" style="left:276px;top:744px;width:33px;height:27px;background:#b0601e"></div>
<svg style="left:283px;top:749px" width="22" height="18"><rect x="7" y="1" width="10" height="10" fill="#50a0e0"/><rect x="8" y="9" width="12" height="8" fill="#e8c090"/><circle cx="6" cy="8" r="5.5" fill="#1a70c8"/><text x="3" y="11" font-size="8" font-weight="bold" fill="#fff" font-family="Liberation Sans">o</text></svg>
<svg style="left:317px;top:750px" width="18" height="14"><path d="M1 1 H7 L9 3 H17 V13 H1 Z" fill="#f0c040"/><rect x="1" y="6" width="16" height="7" fill="#ffd860"/><rect x="6" y="8" width="6" height="3" fill="#3a90c8"/></svg>
<div class="a" style="left:312px;top:769px;width:28px;height:2px;background:#8ab4e0"></div>
<svg style="left:350px;top:749px" width="17" height="17"><path d="M5 4 V2 H12 V4" stroke="#ddd" fill="none"/><rect x="1" y="4" width="15" height="12" rx="2" fill="#f4f4f4"/><rect x="5" y="7" width="3" height="3" fill="#f25022"/><rect x="9" y="7" width="3" height="3" fill="#7fba00"/><rect x="5" y="11" width="3" height="3" fill="#00a4ef"/><rect x="9" y="11" width="3" height="3" fill="#ffb900"/></svg>
<svg style="left:384px;top:750px" width="18" height="16"><rect x="5" y="1" width="12" height="14" fill="#21a366"/><rect x="5" y="8" width="12" height="7" fill="#107c41"/><rect x="1" y="4" width="9" height="9" fill="#185c37"/><text x="3" y="11.5" font-size="8" font-weight="bold" fill="#fff" font-family="Liberation Sans">X</text></svg>
<svg style="left:418px;top:749px" width="18" height="18"><circle cx="9" cy="9" r="8.5" fill="#1f7fd6"/><path d="M1.5 7 Q3 1 9.5 0.8 Q16.5 1.2 17.5 8 Q17.5 12 13 12.5 Q9 12.5 9.5 9 Q6 6 1.5 7 Z" fill="#4ec46a"/><path d="M4 12 Q4 7 9 7 Q12 7 12.5 9.5" stroke="#1651a8" stroke-width="2.5" fill="none"/></svg>
<svg style="left:451px;top:749px" width="19" height="18"><circle cx="10" cy="9" r="8" fill="#d84a2a"/><rect x="1" y="4.5" width="9" height="9" fill="#c43e1c"/><text x="2.5" y="12" font-size="8" font-weight="bold" fill="#fff" font-family="Liberation Sans">P</text></svg>
<div class="a" style="left:477px;top:744px;width:33px;height:27px;background:#3a4652"></div>
<svg style="left:484px;top:750px" width="18" height="16"><rect x="5" y="1" width="12" height="14" rx="1" fill="#2b7cd3"/><rect x="5" y="8" width="12" height="7" fill="#185abd"/><rect x="1" y="4" width="9" height="9" fill="#185abd"/><text x="1.6" y="11.5" font-size="7.5" font-weight="bold" fill="#fff" font-family="Liberation Sans">W</text></svg>
<div class="a" style="left:477px;top:769px;width:33px;height:2px;background:#8ab4e0"></div>
<svg style="left:518px;top:749px" width="21" height="19"><circle cx="15" cy="4" r="3" fill="#7b83eb"/><rect x="8" y="5" width="11" height="10" rx="2" fill="#5059c9"/><rect x="1" y="4" width="10" height="10" fill="#4b53bc"/><text x="3" y="12" font-size="8" font-weight="bold" fill="#fff" font-family="Liberation Sans">T</text><circle cx="16" cy="14" r="4.5" fill="#d13438"/><text x="14" y="17" font-size="6.5" fill="#fff" font-family="Liberation Sans">6</text></svg>
<div class="a" style="left:513px;top:769px;width:28px;height:2px;background:#8ab4e0"></div>
<div class="a" style="left:1424px;top:746px;font-size:7.5px;color:#eee">09:03</div>
<div class="a" style="left:1413px;top:758px;font-size:7.5px;color:#eee">27/01/2022</div>

<!-- ============ OVERLAY ============ -->
<div class="a" style="left:8px;top:30px;width:1584px;height:80px;background:linear-gradient(rgba(0,0,0,0.52) 0,rgba(0,0,0,0.52) 74px,rgba(0,0,0,0.63) 74px);border-radius:12px"></div>
<svg style="left:38px;top:58px" width="28" height="24"><path d="M3 12 H25 M13 2 L3 12 L13 22" stroke="#fff" stroke-width="2.2" fill="none" stroke-linecap="round" stroke-linejoin="round"/></svg>
<div class="a" style="left:107px;top:50.5px;color:#fff;font-size:19px;font-weight:bold;letter-spacing:-0.15px;text-shadow:0 0 2px rgba(0,0,0,.35)">IWG WGWT meeting session 34</div>
<div class="a" style="left:107px;top:76px;color:#fff;font-size:13.5px">08:55<span style="margin-left:9px">29 <span style="font-size:13.5px">位与会者</span></span></div>

<!-- ============ ANDROID STATUS BAR ============ -->
<svg style="left:18px;top:6px" width="42" height="18">
 <text x="0" y="7" font-size="6" fill="#eee" font-family="Liberation Sans">6</text><text x="3.5" y="4.5" font-size="5" fill="#eee" font-family="Liberation Sans">+</text>
 <path d="M6 6 Q13 0 20 6" stroke="#eee" stroke-width="1.8" fill="none"/><path d="M8.5 9 Q13 5 17.5 9" stroke="#eee" stroke-width="1.8" fill="none"/><path d="M11 12 Q13 10.5 15 12" stroke="#eee" stroke-width="1.8" fill="none"/><circle cx="13" cy="15" r="1.5" fill="#eee"/><path d="M18 13 L16.5 15 L18 17 M21 13 L22.5 15 L21 17" stroke="#eee" stroke-width="1" fill="none"/>
 <path transform="translate(64 0) scale(-1 1)" d="M24 9 L28 8 L31 2 Q32 1 33 2 L32 8 L38 8 L39 6 L40 6 L39.5 9.5 L40 13 L39 13 L38 11 L32 11 L33 17 Q32 18 31 17 L28 11 L24 10 Z" fill="#eee"/>
</svg>
<div class="a" style="left:67px;top:6px;color:#eee;font-size:15px">231K/s</div>
<svg style="left:122px;top:9px" width="17" height="12"><rect x="0.5" y="1" width="11" height="10" rx="1.5" fill="#eee"/><path d="M11 4 L16 1 V11 L11 8 Z" fill="#eee"/><rect x="3" y="4" width="3" height="3" fill="#1e1e1e"/></svg>
<svg style="left:143px;top:7px" width="14" height="15"><path d="M2 2 Q1 3 1.5 5 Q4 11 10 13.5 Q12 14 13 12.5 L13 10.5 L10 9 L8.5 10.5 Q5.5 9 4 6 L5.5 4.5 L4 1.5 Z" fill="#eee"/></svg>
<div class="a" style="left:161px;top:7px;width:15px;height:15px;border-radius:3px;background:#1a9bf0"></div>
<svg style="left:163px;top:9px" width="12" height="12"><circle cx="5.5" cy="5.5" r="3.5" stroke="#fff" stroke-width="1.5" fill="none"/><path d="M8 8 L10.5 10.5" stroke="#fff" stroke-width="1.6"/></svg>
<div class="a" style="left:180px;top:7px;width:14px;height:15px;border-radius:3px;background:#e84a6a"></div>
<div class="a" style="left:183px;top:10px;width:8px;height:9px;background:#fbd0dc"></div>
<div class="a" style="left:199px;top:7px;width:15px;height:15px;border-radius:3px;background:#f08030"></div>
<svg style="left:201px;top:9px" width="12" height="12"><path d="M3 2 L9 6 L3 10 Z" stroke="#fff" stroke-width="1.5" fill="none"/></svg>
<svg style="left:219px;top:12px" width="12" height="4"><circle cx="1.5" cy="2" r="1.3" fill="#eee"/><circle cx="6" cy="2" r="1.3" fill="#eee"/><circle cx="10.5" cy="2" r="1.3" fill="#eee"/></svg>

<svg style="left:1458px;top:7px" width="12" height="16"><path d="M2.5 4.5 L9 11 L5.5 14.5 V1.5 L9 5 L2.5 11.5" stroke="#eee" stroke-width="1.5" fill="none"/><circle cx="1" cy="8" r="0.9" fill="#eee"/><circle cx="11" cy="8" r="0.9" fill="#eee"/></svg>
<svg style="left:1476px;top:8px" width="16" height="14"><path d="M1 4 Q1 3 2 3 H4.5 L6 1 H10 L11.5 3 H14 Q15 3 15 4 V12 Q15 13 14 13 H2 Q1 13 1 12 Z" fill="#eee"/><circle cx="8" cy="8" r="2.6" fill="#1e1e1e"/><circle cx="8" cy="8" r="1.5" fill="#eee"/></svg>
<svg style="left:1497px;top:7px" width="20" height="16"><rect x="6" y="1.5" width="8" height="13" rx="1.5" stroke="#eee" stroke-width="1.5" fill="none"/><path d="M3 3 L2 5 L3 7 L2 9 L3 11 L2 13 M17 3 L18 5 L17 7 L18 9 L17 11 L18 13" stroke="#eee" stroke-width="1.3" fill="none"/></svg>
<svg style="left:1521px;top:7px" width="28" height="16"><rect x="1" y="1" width="22" height="14" rx="2" stroke="#eee" stroke-width="1.3" fill="none"/><rect x="3" y="3" width="10" height="10" fill="#777"/><rect x="24.5" y="5" width="2" height="6" fill="#eee"/><text x="12" y="12" font-size="10.5" fill="#eee" text-anchor="middle" font-family="Liberation Sans" font-style="italic">42</text></svg>
<div class="a" style="left:1554px;top:6px;color:#eee;font-size:15px">4:03</div>

<!-- WeChat bubble -->
<div class="a" style="left:1568px;top:332px;width:62px;height:62px;border-radius:50%;background:#868284;box-shadow:0 0 3px rgba(0,0,0,.6)"></div>
<div class="a" style="left:1573px;top:337px;width:52px;height:52px;border-radius:50%;background:#1b7438"></div>
<svg style="left:1578px;top:346px" width="22" height="30"><ellipse cx="11" cy="11" rx="10" ry="8.5" fill="#8f8f8f"/><circle cx="7.5" cy="9" r="1.3" fill="#1a7a3a"/><circle cx="14.5" cy="9" r="1.3" fill="#1a7a3a"/><path d="M4 17 L3 21 L8 18 Z" fill="#8f8f8f"/><ellipse cx="21" cy="22" rx="8" ry="7" fill="#8f8f8f" stroke="#1a7a3a" stroke-width="1.5"/></svg>

<!-- ============ PARTICIPANT STRIP ============ -->
<div class="a" style="left:0;top:771px;width:1600px;height:134px;background:#1f1f1f"></div>
<div class="tile" style="left:-69px"><div class="av" style="background:#d6ecd9;color:#1e5a30;text-indent:3px">LD</div><div class="nm" style="left:17px">Li D (外...&nbsp;&nbsp;&nbsp;<svg width="15" height="15" style="position:relative;display:inline-block;vertical-align:-2px;margin-left:1px"><path d="M5 3 Q5 1 7.5 1 Q10 1 10 3 V7 Q10 9.5 7.5 9.5 Q5 9.5 5 7 Z" fill="#fff"/><path d="M3 6.5 Q3 11 7.5 11 Q12 11 12 6.5 M7.5 11 V14" stroke="#fff" stroke-width="1.3" fill="none"/><path d="M1.5 1.5 L13.5 13.5" stroke="#292929" stroke-width="3"/><path d="M1.5 1.5 L13.5 13.5" stroke="#fff" stroke-width="1.3"/></svg></div></div>
<div class="tile" style="left:61px"><div class="av" style="background:#d8eef2;color:#2a6a70">ZY</div><div class="nm">Zhu Y<svg width="15" height="15" style="position:relative;display:inline-block;vertical-align:-2px;margin-left:7px"><path d="M5 3 Q5 1 7.5 1 Q10 1 10 3 V7 Q10 9.5 7.5 9.5 Q5 9.5 5 7 Z" fill="#fff"/><path d="M3 6.5 Q3 11 7.5 11 Q12 11 12 6.5 M7.5 11 V14" stroke="#fff" stroke-width="1.3" fill="none"/><path d="M1.5 1.5 L13.5 13.5" stroke="#292929" stroke-width="3"/><path d="M1.5 1.5 L13.5 13.5" stroke="#fff" stroke-width="1.3"/></svg></div></div>
<div class="tile" style="left:191px"><div class="av" style="background:#f0d5d9;color:#6b1a28">MM</div><div class="nm">Marc M (外部)<svg width="15" height="15" style="position:relative;display:inline-block;vertical-align:-2px;margin-left:1px"><path d="M5 3 Q5 1 7.5 1 Q10 1 10 3 V7 Q10 9.5 7.5 9.5 Q5 9.5 5 7 Z" fill="#fff"/><path d="M3 6.5 Q3 11 7.5 11 Q12 11 12 6.5 M7.5 11 V14" stroke="#fff" stroke-width="1.3" fill="none"/><path d="M1.5 1.5 L13.5 13.5" stroke="#292929" stroke-width="3"/><path d="M1.5 1.5 L13.5 13.5" stroke="#fff" stroke-width="1.3"/></svg></div></div>
<div class="tile" style="left:321px"><div class="av" style="background:#d9d7f0;color:#2a2870">JM</div><div class="nm">Makino, J<svg width="15" height="15" style="position:relative;display:inline-block;vertical-align:-2px;margin-left:7px"><path d="M5 3 Q5 1 7.5 1 Q10 1 10 3 V7 Q10 9.5 7.5 9.5 Q5 9.5 5 7 Z" fill="#fff"/><path d="M3 6.5 Q3 11 7.5 11 Q12 11 12 6.5 M7.5 11 V14" stroke="#fff" stroke-width="1.3" fill="none"/><path d="M1.5 1.5 L13.5 13.5" stroke="#292929" stroke-width="3"/><path d="M1.5 1.5 L13.5 13.5" stroke="#fff" stroke-width="1.3"/></svg></div></div>
<div class="tile" style="left:451px"><div class="av" style="background:#d6eadb;color:#1e5a30">HI</div><div class="nm">Iida, H<svg width="15" height="15" style="position:relative;display:inline-block;vertical-align:-2px;margin-left:7px"><path d="M5 3 Q5 1 7.5 1 Q10 1 10 3 V7 Q10 9.5 7.5 9.5 Q5 9.5 5 7 Z" fill="#fff"/><path d="M3 6.5 Q3 11 7.5 11 Q12 11 12 6.5 M7.5 11 V14" stroke="#fff" stroke-width="1.3" fill="none"/><path d="M1.5 1.5 L13.5 13.5" stroke="#292929" stroke-width="3"/><path d="M1.5 1.5 L13.5 13.5" stroke="#fff" stroke-width="1.3"/></svg></div></div>
<div class="tile" style="left:581px"><div class="av" style="background:#f0d5d9;color:#6b1a28">JP</div><div class="nm">Jean-Marc P ...<svg width="15" height="15" style="position:relative;display:inline-block;vertical-align:-2px;margin-left:7px"><path d="M5 3 Q5 1 7.5 1 Q10 1 10 3 V7 Q10 9.5 7.5 9.5 Q5 9.5 5 7 Z" fill="#fff"/><path d="M3 6.5 Q3 11 7.5 11 Q12 11 12 6.5 M7.5 11 V14" stroke="#fff" stroke-width="1.3" fill="none"/><path d="M1.5 1.5 L13.5 13.5" stroke="#292929" stroke-width="3"/><path d="M1.5 1.5 L13.5 13.5" stroke="#fff" stroke-width="1.3"/></svg></div></div>
<div class="tile" style="left:711px"><div class="av" style="background:#d9d7f0;color:#2a2870">G</div><div class="nm">Gerry (Guest)<svg width="15" height="15" style="position:relative;display:inline-block;vertical-align:-2px;margin-left:1px"><path d="M5 3 Q5 1 7.5 1 Q10 1 10 3 V7 Q10 9.5 7.5 9.5 Q5 9.5 5 7 Z" fill="#fff"/><path d="M3 6.5 Q3 11 7.5 11 Q12 11 12 6.5 M7.5 11 V14" stroke="#fff" stroke-width="1.3" fill="none"/><path d="M1.5 1.5 L13.5 13.5" stroke="#292929" stroke-width="3"/><path d="M1.5 1.5 L13.5 13.5" stroke="#fff" stroke-width="1.3"/></svg></div></div>
<div class="tile" style="left:841px"><div class="av" style="background:#f7ddd2;color:#6b2a10">CC</div><div class="nm">Carmelo C (...&nbsp;&nbsp;&nbsp;&nbsp;<svg width="15" height="15" style="position:relative;display:inline-block;vertical-align:-2px;margin-left:1px"><path d="M5 3 Q5 1 7.5 1 Q10 1 10 3 V7 Q10 9.5 7.5 9.5 Q5 9.5 5 7 Z" fill="#fff"/><path d="M3 6.5 Q3 11 7.5 11 Q12 11 12 6.5 M7.5 11 V14" stroke="#fff" stroke-width="1.3" fill="none"/><path d="M1.5 1.5 L13.5 13.5" stroke="#292929" stroke-width="3"/><path d="M1.5 1.5 L13.5 13.5" stroke="#fff" stroke-width="1.3"/></svg></div></div>
<div class="tile" style="left:1101px"><div class="av" style="background:#d6eadb;color:#1e5a30">MT</div><div class="nm">Marco T (外部)</div></div>

<!-- Nicolas M video -->
<div class="tile" style="left:971px;width:128px;background:#c8a090">
 <div style="position:absolute;left:0;top:0;width:128px;height:129px;filter:blur(0.7px)">
 <div class="a" style="left:0;top:0;width:128px;height:31px;background:linear-gradient(#8a8a8a,#a6a4a4 60%,#bcb9b8)"></div>
 <div class="a" style="left:0;top:30px;width:128px;height:7px;background:#d4d0cc"></div>
 <div class="a" style="left:0;top:37px;width:128px;height:92px;background:#d2b09c"></div>
 <div class="a" style="left:0;top:37px;width:128px;height:92px;background:repeating-linear-gradient(90deg,rgba(185,75,60,.6) 0 3px,transparent 3px 12px)"></div>
 <div class="a" style="left:0;top:37px;width:128px;height:92px;background:repeating-linear-gradient(0deg,rgba(175,85,65,.45) 0 3px,transparent 3px 11px)"></div>
 <div class="a" style="left:0;top:37px;width:128px;height:92px;background:radial-gradient(ellipse at 7px 6px,rgba(90,70,55,.45) 0 3px,transparent 3.5px) 0 0/12px 11px"></div>
 <div class="a" style="left:68px;top:40px;width:46px;height:30px;border-radius:23px 23px 6px 6px;background:#b2aba8"></div>
 <div class="a" style="left:72px;top:46px;width:40px;height:58px;border-radius:42% 42% 48% 48%;background:#cdc9d0"></div>
 <div class="a" style="left:74px;top:66px;width:36px;height:3px;background:rgba(70,70,80,.45)"></div>
 <div class="a" style="left:86px;top:68px;width:6px;height:14px;background:rgba(180,150,150,.4)"></div>
 <div class="a" style="left:56px;top:98px;width:72px;height:31px;border-radius:20px 20px 0 0;background:#8a3e3a"></div>
 </div>
 <div class="a" style="left:9px;top:102px;width:118px;height:21px;border-radius:10px;background:rgba(45,25,25,.6)"></div>
 <div class="nm" style="width:128px;left:2px">Nicolas M (外...&nbsp;<svg width="15" height="15" style="position:relative;display:inline-block;vertical-align:-2px;margin-left:1px"><path d="M5 3 Q5 1 7.5 1 Q10 1 10 3 V7 Q10 9.5 7.5 9.5 Q5 9.5 5 7 Z" fill="#fff"/><path d="M3 6.5 Q3 11 7.5 11 Q12 11 12 6.5 M7.5 11 V14" stroke="#fff" stroke-width="1.3" fill="none"/><path d="M1.5 1.5 L13.5 13.5" stroke="#fff" stroke-width="1.3"/></svg></div>
</div>
<!-- COLLOT E video -->
<div class="tile" style="left:1231px;width:128px;background:#d8ccc6">
 <div style="position:absolute;left:0;top:0;width:128px;height:129px;filter:blur(0.7px)">
 <div class="a" style="left:0;top:0;width:128px;height:50px;background:linear-gradient(#dccfcc 0,#d2c6c4 25%,#b4a8a6 45%,#cfc2bc 80%,#dbcfc8 100%)"></div>
 <div class="a" style="left:0;top:50px;width:128px;height:78px;background:linear-gradient(90deg,#c0b8b8 0,#d4cac6 60px,#e6dbd2 100px,#ece2da 128px)"></div>
 <div class="a" style="left:32px;top:0;width:3px;height:50px;background:rgba(255,255,255,.55);transform:skewX(10deg)"></div>
 <div class="a" style="left:108px;top:0;width:3px;height:40px;background:rgba(255,255,255,.5);transform:skewX(25deg)"></div>
 <div class="a" style="left:0;top:44px;width:60px;height:84px;background:linear-gradient(#a8a4a8,#7c7c88 40%,#6e7080)"></div>
 <div class="a" style="left:0;top:41px;width:91px;height:30px;border:3px solid #3a3a40;border-left:none;border-bottom:none;border-radius:0 10px 0 0"></div>
 <div class="a" style="left:11px;top:42px;width:3px;height:86px;background:#3a3a40"></div>
 <div class="a" style="left:0;top:71px;width:46px;height:3px;background:#3a3a40"></div>
 <div class="a" style="left:48px;top:52px;width:66px;height:76px;border-radius:48% 48% 30% 30%;background:#5a3c30"></div>
 <div class="a" style="left:55px;top:60px;width:40px;height:52px;border-radius:45% 45% 48% 48%;background:#bc9c92"></div>
 <div class="a" style="left:60px;top:108px;width:50px;height:20px;background:#4a3028"></div>
 </div>
 <div class="a" style="left:14px;top:103px;width:114px;height:20px;border-radius:10px;background:rgba(40,35,35,.55)"></div>
 <div class="nm" style="width:128px;left:5px;font-size:14.2px;top:104px">COLLOT E (外部)</div>
</div>
<!-- self view -->
<div class="a" style="left:1361px;top:775px;width:238px;height:128px;overflow:hidden;background:#d9d2c2">
 <div style="position:absolute;left:0;top:0;width:238px;height:128px;filter:blur(0.8px)">
 <div class="a" style="left:0;top:0;width:72px;height:128px;background:linear-gradient(90deg,#d6cfb4,#e2d9bc 50px,#d8d0b6)"></div>
 <div class="a" style="left:72px;top:0;width:166px;height:128px;background:linear-gradient(#d9cfbe,#d6d0c4 50%,#dad6cc)"></div>
 <div class="a" style="left:138px;top:49px;width:78px;height:14px;background:#8e8c8c"></div>
 <div class="a" style="left:136px;top:63px;width:82px;height:65px;background:#e2e0de"></div>
 <div class="a" style="left:140px;top:68px;width:32px;height:60px;background:#fdfdfd"></div>
 <div class="a" style="left:177px;top:71px;width:34px;height:57px;background:#f8f8f8"></div>
 <div class="a" style="left:70px;top:22px;width:72px;height:60px;border-radius:48% 48% 35% 35%;background:#1c1818"></div>
 <div class="a" style="left:68px;top:60px;width:10px;height:22px;border-radius:50%;background:#a88070"></div>
 <div class="a" style="left:134px;top:60px;width:10px;height:22px;border-radius:50%;background:#a88070"></div>
 <div class="a" style="left:76px;top:45px;width:60px;height:72px;border-radius:44% 44% 50% 50%;background:#bc9c90"></div>
 <div class="a" style="left:88px;top:67px;width:12px;height:3px;background:#5a4038;border-radius:2px"></div>
 <div class="a" style="left:113px;top:67px;width:12px;height:3px;background:#5a4038;border-radius:2px"></div>
 <div class="a" style="left:97px;top:100px;width:18px;height:3px;background:#8a6058;border-radius:2px"></div>
 <div class="a" style="left:88px;top:110px;width:38px;height:18px;background:#b08a7c"></div>
 <div class="a" style="left:52px;top:114px;width:112px;height:20px;border-radius:40% 40% 0 0;background:#ebe8e6"></div>
 <div class="a" style="left:94px;top:112px;width:26px;height:16px;background:#ae8676;clip-path:polygon(0 0,100% 0,50% 100%)"></div>
 </div>
 <svg style="left:207px;top:2px" width="30" height="30"><rect x="2" y="1.5" width="18" height="17" rx="3" fill="rgba(150,140,130,.6)" stroke="#fff" stroke-width="1.6"/><path d="M28 4 L22 10 L28 15" stroke="#fff" stroke-width="1.6" fill="none"/><path d="M3 23 Q3 27 8 27 H15 M12 24 L15 27 L12 30 M21 27 H25 Q28 27 28 24" stroke="#fff" stroke-width="1.6" fill="none"/></svg>
</div>
<!-- ============ BOTTOM BAR ============ -->
<div class="a" style="left:0;top:905px;width:1600px;height:95px;background:#3b3b3b"></div>
<!-- presenter label -->
<div class="a" style="left:6px;top:745px;color:#fff;font-size:15px;background:#181818;border-radius:6px;padding:1px 4px 3px 4px">Nicolas M (外部)<svg width="15" height="15" style="position:relative;display:inline-block;vertical-align:-2px;margin-left:1px"><path d="M5 3 Q5 1 7.5 1 Q10 1 10 3 V7 Q10 9.5 7.5 9.5 Q5 9.5 5 7 Z" fill="#fff"/><path d="M3 6.5 Q3 11 7.5 11 Q12 11 12 6.5 M7.5 11 V14" stroke="#fff" stroke-width="1.3" fill="none"/><path d="M1.5 1.5 L13.5 13.5" stroke="#1e1e1e" stroke-width="3"/><path d="M1.5 1.5 L13.5 13.5" stroke="#fff" stroke-width="1.3"/></svg></div>

<!-- controls -->
<svg style="left:442px;top:936px" width="34" height="34"><path d="M17 3 C25 3 31 9 31 16.5 C31 24 25 30 17 30 C14.5 30 12.5 29.5 10.5 28.5 L4 30.5 L5.8 24.5 C4 22 3 19.5 3 16.5 C3 9 9 3 17 3 Z" stroke="#fff" stroke-width="2" fill="none" stroke-linejoin="round"/><path d="M11.5 13.5 H22.5 M11.5 19 H19" stroke="#fff" stroke-width="2" stroke-linecap="round"/></svg>
<svg style="left:527px;top:935px" width="34" height="34"><circle cx="10" cy="8" r="5.5" stroke="#fff" stroke-width="2" fill="none"/><circle cx="24" cy="10" r="4.5" stroke="#fff" stroke-width="2" fill="none"/><path d="M3 19 H17 Q19 19 19 21 V25 Q19 31 10 31 Q3 31 3 25 Z" stroke="#fff" stroke-width="2" fill="none" stroke-linejoin="round"/><path d="M21 19 H29 Q31 19 31 21 V24 Q31 30 24 30 Q22 30 20.5 29.5" stroke="#fff" stroke-width="2" fill="none"/></svg>
<svg style="left:612px;top:937px" width="34" height="32"><rect x="2" y="4" width="30" height="22" rx="2.5" stroke="#fff" stroke-width="2" fill="none"/><path d="M17 21 V10 M12 14.5 L17 9.5 L22 14.5" stroke="#fff" stroke-width="2" fill="none" stroke-linecap="round" stroke-linejoin="round"/></svg>
<svg style="left:696px;top:933px" width="36" height="38"><path d="M5 18 V13 Q5 11.5 6.5 11.5 Q8 11.5 8 13 V16 M8 14 V6 Q8 4.5 9.5 4.5 Q11 4.5 11 6 V13 M11 13 V4 Q11 2.5 12.5 2.5 Q14 2.5 14 4 V13 M14 13 V5 Q14 3.5 15.5 3.5 Q17 3.5 17 5 V13 M17 12 V8 Q17 6.5 18.5 6.5 Q20 6.5 20 8 V16 M5 18 Q5 25 12 25" stroke="#fff" stroke-width="2" fill="none" stroke-linecap="round" stroke-linejoin="round"/><circle cx="22" cy="23" r="9.5" fill="#3b3b3b" stroke="#fff" stroke-width="2"/><circle cx="19" cy="21.5" r="1.2" fill="#fff"/><circle cx="25" cy="21.5" r="1.2" fill="#fff"/><path d="M18.5 25.5 Q22 28.5 25.5 25.5" stroke="#fff" stroke-width="1.7" fill="none" stroke-linecap="round"/></svg>
<div class="a" style="left:756px;top:920px;width:3px;height:65px;background:#777;border-radius:1px"></div>
<svg style="left:784px;top:937px" width="34" height="30"><rect x="2" y="5" width="20" height="20" rx="3.5" fill="#fff"/><path d="M23 12 L31 6.5 V23.5 L23 18 Z" fill="#fff" stroke="#fff" stroke-width="1" stroke-linejoin="round"/></svg>
<svg style="left:869px;top:935px" width="34" height="36"><path d="M12 9 Q12 4 17 4 Q22 4 22 9 V17 Q22 22 17 22 Q12 22 12 17 Z" stroke="#fff" stroke-width="2" fill="#fff"/><path d="M8 16 Q8 26 17 26 Q26 26 26 16 M17 26 V32" stroke="#fff" stroke-width="2" fill="none" stroke-linecap="round"/><path d="M4 3 L31 31" stroke="#3b3b3b" stroke-width="5"/><path d="M4 3 L31 31" stroke="#fff" stroke-width="2" stroke-linecap="round"/></svg>
<svg style="left:954px;top:936px" width="36" height="34"><path d="M3 12 Q3 10.5 4.5 10.5 H9 L17 4 Q19 3 19 5 V28 Q19 30 17 29 L9 22.5 H4.5 Q3 22.5 3 21 Z" fill="#fff"/><path d="M23.5 11 Q27 16.5 23.5 22 M27.5 7 Q33.5 16.5 27.5 26" stroke="#fff" stroke-width="2.2" fill="none" stroke-linecap="round"/></svg>
<svg style="left:1040px;top:946px" width="32" height="12"><circle cx="5" cy="6" r="3.3" fill="#fff"/><circle cx="16" cy="6" r="3.3" fill="#fff"/><circle cx="27" cy="6" r="3.3" fill="#fff"/></svg>
<div class="a" style="left:1104px;top:915px;width:75px;height:74px;border-radius:8px;background:#a4193c"></div>
<svg style="left:1124px;top:940px" width="34" height="24"><path d="M3 11.5 Q3 8 7 6.5 Q17 2.5 27 6.5 Q31 8 31 11.5 V14 Q31 16 29 15.8 L24 15 Q22 14.7 22 12.7 V10.5 Q17 9 12 10.5 V12.7 Q12 14.7 10 15 L5 15.8 Q3 16 3 14 Z" fill="#fff"/></svg>

</body></html>
